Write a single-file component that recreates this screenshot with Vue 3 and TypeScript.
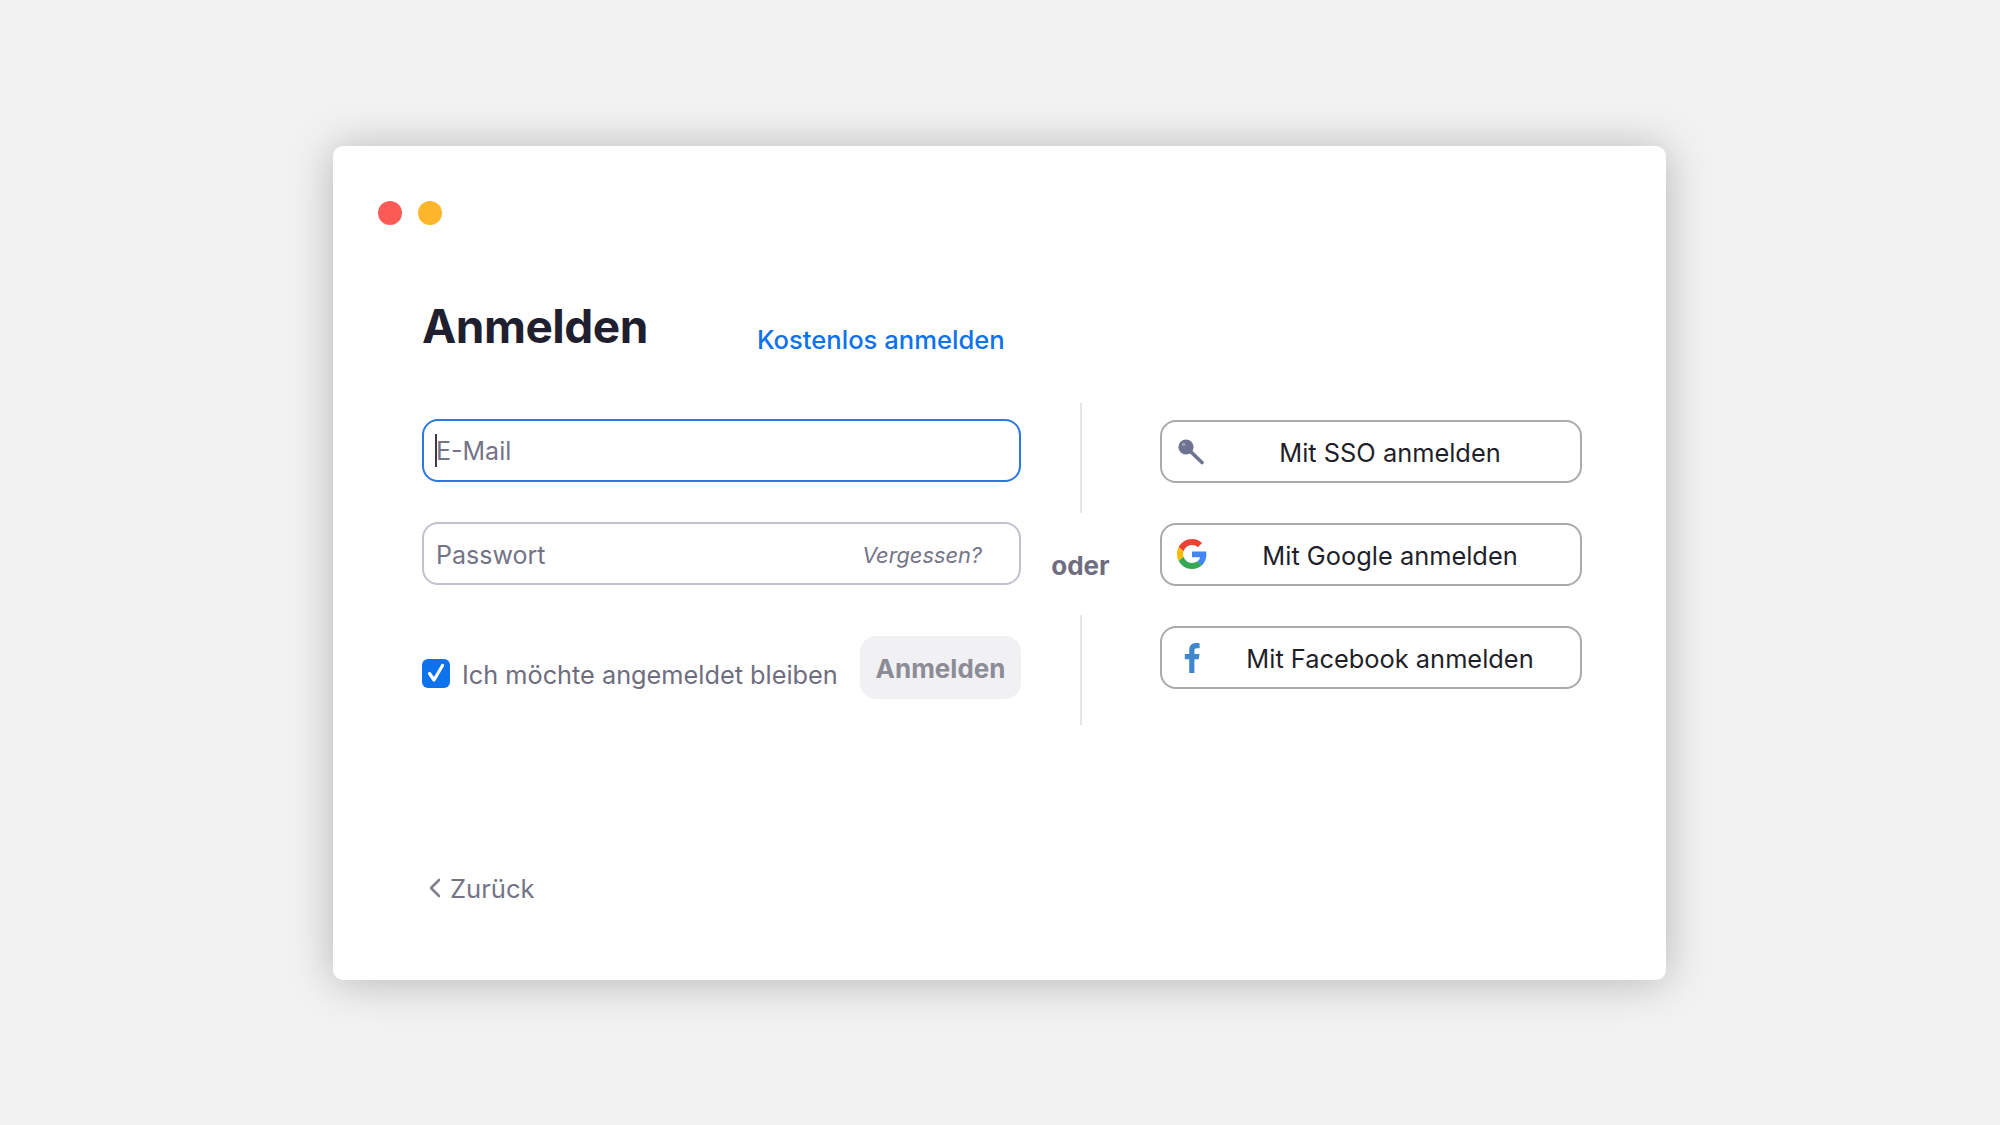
<script setup lang="ts">
import { ref } from 'vue'

const email = ref('')
const password = ref('')
const stayLoggedIn = ref(true)
</script>

<template>
<main class="page">
	<section class="window">
		<div class="lights">
			<span class="light red"></span>
			<span class="light yellow"></span>
		</div>
		<header class="head">
			<h1>Anmelden</h1>
			<a class="signup">Kostenlos anmelden</a>
		</header>
		<div class="columns">
			<form class="form" @submit.prevent>
				<div class="field focused">
					<span class="caret"></span>
					<input v-model="email" type="text" placeholder="E-Mail" />
				</div>
				<div class="field">
					<input v-model="password" type="password" placeholder="Passwort" />
					<a class="forgot">Vergessen?</a>
				</div>
				<div class="actions">
					<label class="stay">
						<input v-model="stayLoggedIn" type="checkbox" />
						<span class="box">
							<svg v-if="stayLoggedIn" width="22" height="24" viewBox="0 0 22 24" fill="none">
								<path d="M4.5 12.5 L9 19 L17.5 4.5" stroke="#fff" stroke-width="3.2" stroke-linecap="round" stroke-linejoin="round" />
							</svg>
						</span>
						<span class="stay-text">Ich möchte angemeldet bleiben</span>
					</label>
					<button class="submit" type="submit">Anmelden</button>
				</div>
			</form>
			<div class="divider">
				<span class="line"></span>
				<span class="or">oder</span>
				<span class="line"></span>
			</div>
			<div class="providers">
				<button class="provider" type="button">
					<span class="icon">
						<svg width="28" height="27" viewBox="0 0 28 27">
							<circle cx="8" cy="9" r="7.6" fill="#6d7391" />
							<circle cx="5.6" cy="6.4" r="1.7" fill="#fff" opacity="0.35" />
							<path d="M11 12 L24 24.5" stroke="#6d7391" stroke-width="3.6" stroke-linecap="round" />
						</svg>
					</span>
					<span class="label">Mit SSO anmelden</span>
				</button>
				<button class="provider" type="button">
					<span class="icon">
						<svg width="30" height="30" viewBox="0 0 48 48">
							<path fill="#ea4335" d="M24 9.5c3.54 0 6.71 1.22 9.21 3.6l6.85-6.85C35.9 2.38 30.47 0 24 0 14.62 0 6.51 5.38 2.56 13.22l7.98 6.19C12.43 13.72 17.74 9.5 24 9.5z" />
							<path fill="#4285f4" d="M46.98 24.55c0-1.57-.15-3.09-.38-4.55H24v9.02h12.94c-.58 2.96-2.26 5.48-4.78 7.18l7.73 6c4.51-4.18 7.09-10.36 7.09-17.65z" />
							<path fill="#fbbc05" d="M10.53 28.59c-.48-1.45-.76-2.99-.76-4.59s.27-3.14.76-4.59l-7.98-6.19C.92 16.46 0 20.12 0 24c0 3.88.92 7.54 2.56 10.78l7.97-6.19z" />
							<path fill="#34a853" d="M24 48c6.48 0 11.93-2.13 15.89-5.81l-7.73-6c-2.15 1.45-4.92 2.3-8.16 2.3-6.26 0-11.57-4.22-13.47-9.91l-7.98 6.19C6.51 42.62 14.62 48 24 48z" />
						</svg>
					</span>
					<span class="label">Mit Google anmelden</span>
				</button>
				<button class="provider" type="button">
					<span class="icon">
						<svg width="16" height="31" viewBox="0 0 16 31">
							<path fill="#3f88cf" d="M10.4 31V17.2h4.4l.7-5.2h-5.1V8.9c0-1.5.5-2.6 2.6-2.6H15.6V1.2C15 1.1 13.6 1 12.1 1 8 1 5.2 3.4 5.2 8.2V12H.8v5.2h4.4V31z" />
						</svg>
					</span>
					<span class="label">Mit Facebook anmelden</span>
				</button>
			</div>
		</div>
		<a class="back">
			<svg width="14" height="20" viewBox="0 0 14 20" fill="none">
				<path d="M11 2 L3 10 L11 18" stroke="#80808f" stroke-width="2.6" stroke-linecap="round" stroke-linejoin="round" />
			</svg>
			Zurück
		</a>
	</section>
</main>
</template>

<style>
html, body {
	margin: 0;
	background: #f2f2f3;
}
</style>

<style scoped>
* {
	box-sizing: border-box;
}

.page {
	align-items: center;
	background: #f2f2f3;
	display: flex;
	font-family: Inter, 'Liberation Sans', sans-serif;
	height: 1125px;
	justify-content: center;
	overflow: hidden;
	padding-right: 1px;
}

.window {
	background: #fff;
	border-radius: 10px;
	box-shadow: 0 2px 44px rgba(0, 0, 0, 0.25);
	display: flex;
	flex-direction: column;
	height: 834px;
	padding: 55px 84px 0 45px;
	width: 1333px;
}

.lights {
	display: flex;
	gap: 16px;
}

.light {
	border-radius: 50%;
	height: 24px;
	width: 24px;
}

.red {
	background: #fb5a55;
}

.yellow {
	background: #fdb62b;
}

.head {
	align-items: baseline;
	display: flex;
	margin: 73px 0 0 44px;
}

h1 {
	color: #1f1f2f;
	font-size: 46px;
	font-weight: 700;
	letter-spacing: -0.5px;
	line-height: 56px;
	margin: 0;
	width: 335px;
}

.signup {
	color: #0e72ed;
	font-size: 25.6px;
	font-weight: 500;
	position: relative;
	top: 6px;
}

.columns {
	display: flex;
	margin: 65px 0 0 44px;
}

.form {
	display: flex;
	flex-direction: column;
	width: 599px;
}

.field {
	align-items: center;
	border: 2px solid #c1c1d0;
	border-radius: 16px;
	display: flex;
	height: 63px;
	margin-bottom: 40px;
	padding: 3px 37px 0 12px;
	position: relative;
}

.field.focused {
	border: 2.5px solid #2a78e0;
	padding-top: 2px;
}

.field input {
	background: none;
	border: 0;
	color: #1f1f2f;
	flex: 1;
	font-family: inherit;
	font-size: 25px;
	min-width: 0;
	outline: none;
	padding: 0;
}

.field input::placeholder {
	color: #747487;
	opacity: 1;
}

.caret {
	background: #3a3a4a;
	height: 33px;
	left: 11px;
	position: absolute;
	top: 13px;
	width: 2px;
}

.forgot {
	color: #747487;
	font-size: 21.8px;
	font-style: italic;
}

.actions {
	align-items: center;
	display: flex;
	justify-content: space-between;
	margin-top: 11px;
}

.stay {
	align-items: center;
	color: #6e6e80;
	display: flex;
	font-size: 25.3px;
	gap: 12px;
	position: relative;
	top: 6px;
}

.stay input {
	display: none;
}

.stay-text {
	padding-top: 2px;
}

.box {
	align-items: center;
	background: #0e72ed;
	border-radius: 6px;
	display: flex;
	height: 29px;
	justify-content: center;
	width: 28px;
}

.submit {
	background: #f1f1f4;
	border: 0;
	border-radius: 16px;
	color: #8c8c96;
	font-family: inherit;
	font-size: 26px;
	font-weight: 700;
	height: 63px;
	padding: 2px 0 0;
	width: 161px;
}

.divider {
	align-items: center;
	display: flex;
	flex-direction: column;
	margin: -16px 20px 0 0;
	width: 119px;
}

.line {
	background: #e6e6ea;
	height: 110px;
	width: 2px;
}

.or {
	color: #6e6e80;
	font-size: 26px;
	font-weight: 700;
	line-height: 32px;
	margin: 37px 0 33px;
}

.providers {
	display: flex;
	flex-direction: column;
	gap: 40px;
	padding-top: 1px;
	width: 422px;
}

.provider {
	align-items: center;
	background: #fff;
	border: 2px solid #a9a9ae;
	border-radius: 16px;
	color: #1f1f2a;
	display: flex;
	font-family: inherit;
	font-size: 25.4px;
	height: 63px;
	padding: 0 7px 0 15px;
}

.icon {
	align-items: center;
	display: flex;
	flex: none;
	justify-content: center;
	width: 30px;
}

.label {
	flex: 1;
	padding-top: 2px;
	text-align: center;
}

.back {
	align-items: center;
	color: #747487;
	display: flex;
	font-size: 25.6px;
	gap: 8px;
	margin: auto 0 76px 50px;
}
</style>
